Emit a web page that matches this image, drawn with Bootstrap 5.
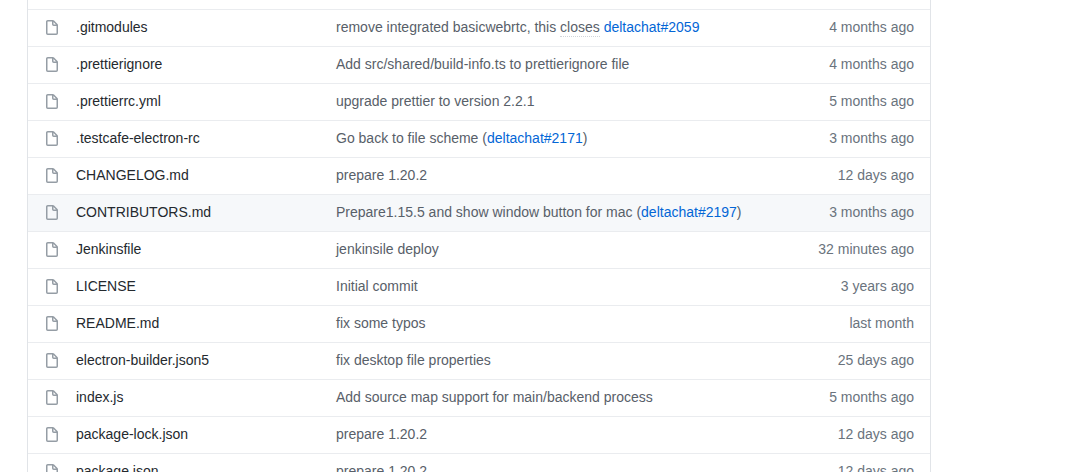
<!DOCTYPE html>
<html lang="en">
<head>
<meta charset="utf-8">
<meta name="viewport" content="width=device-width, initial-scale=1">
<title>Repository files</title>
<link rel="stylesheet" href="https://cdn.jsdelivr.net/npm/bootstrap@5.3.0/dist/css/bootstrap.min.css">
<style>
html { overflow: hidden; }
body { font-family: "Liberation Sans", Arial, sans-serif; font-size: 14px; line-height: 20px; color: #24292e; background: #fff; height: 100vh; overflow: hidden; }
.page { display: grid; grid-template-columns: 27px minmax(0, 1fr) 155px; }
.file-box { grid-column: 2; border: 1px solid #e1e4e8; border-top: 0; }
.files { color: inherit; margin: 0; table-layout: fixed; }
.files td { height: 37px; padding: 7px 0 8px; border-top: 1px solid #eaecef; white-space: nowrap; vertical-align: top; background: transparent; }
.files tr:first-child td { height: 9px; padding: 0; border-top: 0; }
.files tr.active-row { background: #f6f8fa; }
.files .col-icon { width: 48px; padding-left: 16px; }
.files .col-name { width: 260px; }
.files .col-age { width: 140px; padding-right: 16px; color: #6a737d; text-align: right; }
.files .col-msg { color: #586069; }
.files .col-name a { color: #24292e; }
.files .col-msg a { color: #0366d6; }
.files svg { display: block; margin-top: 3px; fill: #959da5; }
.issue-keyword { padding-bottom: 1px; border-bottom: 1px dotted #d1d5da; }
</style>
<script src="https://cdn.jsdelivr.net/npm/bootstrap@5.3.0/dist/js/bootstrap.bundle.min.js"></script>
</head>
<body>
<svg class="d-none" aria-hidden="true"><symbol id="file" viewBox="0 0 16 16"><path fill-rule="evenodd" d="M3.75 1.5a.25.25 0 00-.25.25v11.5c0 .138.112.25.25.25h8.5a.25.25 0 00.25-.25V6H9.75A1.75 1.75 0 018 4.25V1.5H3.75zm5.75.56v2.19c0 .138.112.25.25.25h2.19L9.5 2.06zM2 1.75C2 .784 2.784 0 3.75 0h5.086c.464 0 .909.184 1.237.513l3.414 3.414c.329.328.513.773.513 1.237v8.086A1.75 1.75 0 0112.25 15h-8.5A1.75 1.75 0 012 13.25V1.75z"/></symbol></svg>
<main class="page">
<div class="file-box">
<table class="table table-borderless files">
<tbody>
<tr><td class="col-icon"></td><td class="col-name"></td><td class="col-msg"></td><td class="col-age"></td></tr>
<tr><td class="col-icon"><svg width="16" height="16"><use href="#file"/></svg></td><td class="col-name"><a class="text-decoration-none" href="#">.gitmodules</a></td><td class="col-msg">remove integrated basicwebrtc, this <span class="issue-keyword">closes</span> <a class="text-decoration-none" href="#">deltachat#2059</a></td><td class="col-age">4 months ago</td></tr>
<tr><td class="col-icon"><svg width="16" height="16"><use href="#file"/></svg></td><td class="col-name"><a class="text-decoration-none" href="#">.prettierignore</a></td><td class="col-msg">Add src/shared/build-info.ts to prettierignore file</td><td class="col-age">4 months ago</td></tr>
<tr><td class="col-icon"><svg width="16" height="16"><use href="#file"/></svg></td><td class="col-name"><a class="text-decoration-none" href="#">.prettierrc.yml</a></td><td class="col-msg">upgrade prettier to version 2.2.1</td><td class="col-age">5 months ago</td></tr>
<tr><td class="col-icon"><svg width="16" height="16"><use href="#file"/></svg></td><td class="col-name"><a class="text-decoration-none" href="#">.testcafe-electron-rc</a></td><td class="col-msg">Go back to file scheme (<a class="text-decoration-none" href="#">deltachat#2171</a>)</td><td class="col-age">3 months ago</td></tr>
<tr><td class="col-icon"><svg width="16" height="16"><use href="#file"/></svg></td><td class="col-name"><a class="text-decoration-none" href="#">CHANGELOG.md</a></td><td class="col-msg">prepare 1.20.2</td><td class="col-age">12 days ago</td></tr>
<tr class="active-row"><td class="col-icon"><svg width="16" height="16"><use href="#file"/></svg></td><td class="col-name"><a class="text-decoration-none" href="#">CONTRIBUTORS.md</a></td><td class="col-msg">Prepare1.15.5 and show window button for mac (<a class="text-decoration-none" href="#">deltachat#2197</a>)</td><td class="col-age">3 months ago</td></tr>
<tr><td class="col-icon"><svg width="16" height="16"><use href="#file"/></svg></td><td class="col-name"><a class="text-decoration-none" href="#">Jenkinsfile</a></td><td class="col-msg">jenkinsile deploy</td><td class="col-age">32 minutes ago</td></tr>
<tr><td class="col-icon"><svg width="16" height="16"><use href="#file"/></svg></td><td class="col-name"><a class="text-decoration-none" href="#">LICENSE</a></td><td class="col-msg">Initial commit</td><td class="col-age">3 years ago</td></tr>
<tr><td class="col-icon"><svg width="16" height="16"><use href="#file"/></svg></td><td class="col-name"><a class="text-decoration-none" href="#">README.md</a></td><td class="col-msg">fix some typos</td><td class="col-age">last month</td></tr>
<tr><td class="col-icon"><svg width="16" height="16"><use href="#file"/></svg></td><td class="col-name"><a class="text-decoration-none" href="#">electron-builder.json5</a></td><td class="col-msg">fix desktop file properties</td><td class="col-age">25 days ago</td></tr>
<tr><td class="col-icon"><svg width="16" height="16"><use href="#file"/></svg></td><td class="col-name"><a class="text-decoration-none" href="#">index.js</a></td><td class="col-msg">Add source map support for main/backend process</td><td class="col-age">5 months ago</td></tr>
<tr><td class="col-icon"><svg width="16" height="16"><use href="#file"/></svg></td><td class="col-name"><a class="text-decoration-none" href="#">package-lock.json</a></td><td class="col-msg">prepare 1.20.2</td><td class="col-age">12 days ago</td></tr>
<tr><td class="col-icon"><svg width="16" height="16"><use href="#file"/></svg></td><td class="col-name"><a class="text-decoration-none" href="#">package.json</a></td><td class="col-msg">prepare 1.20.2</td><td class="col-age">12 days ago</td></tr>
</tbody>
</table>
</div>
</main>
</body>
</html>
